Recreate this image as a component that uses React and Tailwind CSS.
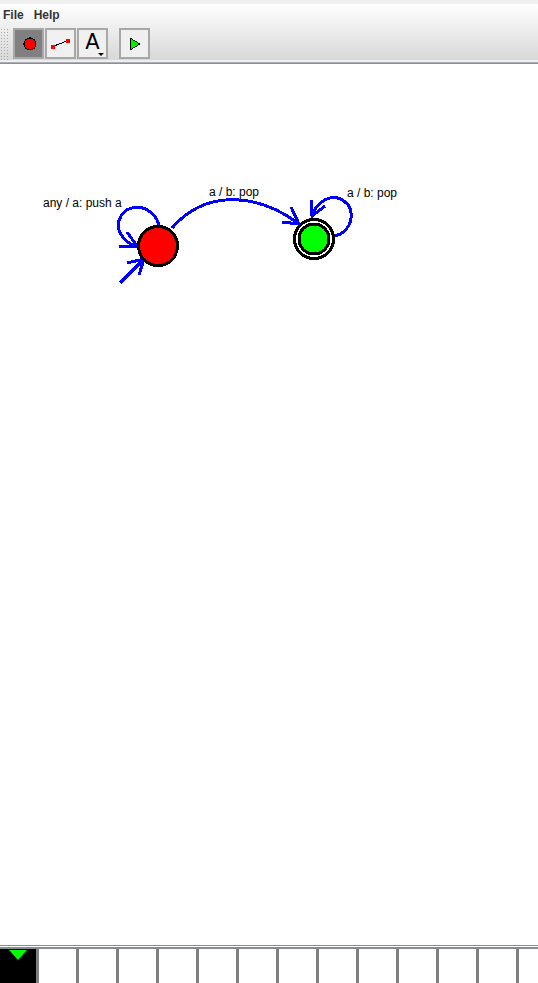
const cells = Array.from({ length: 14 }, (_, i) => i);

function ToolButton({ active, className = "", children }) {
  return (
    <button
      className={`flex h-[31px] w-[31px] shrink-0 items-center justify-center border-2 border-[#a8a8a8] ${
        active ? "bg-[#808080]" : "bg-[#f0f0f0]"
      } ${className}`}
    >
      {children}
    </button>
  );
}

function Grip() {
  return (
    <div className="h-[32px] w-[9px] shrink-0 bg-[radial-gradient(#a8a8a8_1px,transparent_1px)] bg-[length:3px_3px]" />
  );
}

// canvas starts at y=64 in the window, the viewBox keeps window coordinates
function Automaton() {
  const blue = "#0000ff";
  return (
    <svg width="538" height="240" viewBox="0 64 538 240" className="block" fill="none" shapeRendering="crispEdges">
      <g stroke={blue} strokeWidth="3">
        <path d="M159 226 C155 206 130 201 121 216 C113 230 125 243 136 246" />
        <path d="M119 246 L137 246 L127 232" />
        <path d="M120 283 L144 259" />
        <path d="M127 263 L144 259 L139 275" />
        <path d="M172 228 C205 190 255 192 298 223" />
        <path d="M282 222 L299 224 L291 207" />
        <path d="M335 236 C352 232 357 210 344 201 C332 192 316 202 312 216" />
        <path d="M325 206 L312 216 L311 200" />
      </g>
      <circle cx="158" cy="246" r="19.5" fill="#ff0000" stroke="#000" strokeWidth="3" />
      <circle cx="314" cy="239" r="19.5" fill="#fff" stroke="#000" strokeWidth="3" />
      <circle cx="314" cy="239" r="15" fill="#00ff00" stroke="#000" strokeWidth="3" />
    </svg>
  );
}

export default function App() {
  return (
    <div className="flex h-[983px] w-[538px] flex-col overflow-hidden bg-white font-['Liberation_Sans',sans-serif]">
      <div className="flex h-[64px] shrink-0 flex-col bg-[#f0f0f0] pt-[4px]">
        <div className="flex min-h-0 flex-1 flex-col bg-gradient-to-b from-white to-[#d8d8d8]">
          <div className="flex h-[22px] shrink-0 items-start gap-[10px] pl-[3px] pt-[4px] text-[12px] font-bold leading-[14px] text-[#333333]">
            <span>File</span>
            <span>Help</span>
          </div>

          <div className="flex min-h-0 flex-1 items-start pt-[2px]">
            <Grip />
            <div className="ml-[4px] flex gap-px">
              <ToolButton active>
                <svg width="14" height="14" viewBox="0 0 14 14" shapeRendering="crispEdges" className="translate-x-px">
                  <circle cx="7" cy="7" r="6" fill="#ff0000" stroke="#000" strokeWidth="1.2" />
                </svg>
              </ToolButton>
              <ToolButton>
                <svg width="22" height="12" viewBox="0 0 22 12" shapeRendering="crispEdges">
                  <path d="M4 8 L17 3" stroke="#000" strokeWidth="1" />
                  <rect x="1" y="7" width="4" height="4" fill="#ff0000" />
                  <rect x="16" y="1" width="4" height="4" fill="#ff0000" />
                </svg>
              </ToolButton>
              <ToolButton className="relative">
                <span className="mb-[3px] font-['DejaVu_Sans',sans-serif] text-[21px] leading-none text-black">A</span>
                <span className="absolute bottom-[1px] right-[2px] h-0 w-0 border-x-[3px] border-t-[3px] border-x-transparent border-t-black" />
              </ToolButton>
            </div>
            <ToolButton className="ml-[11px]">
              <svg width="12" height="14" viewBox="0 0 12 14" shapeRendering="crispEdges">
                <path d="M1 1 L11 7 L1 13 Z" fill="#00ee00" stroke="#000" strokeWidth="1" />
              </svg>
            </ToolButton>
          </div>
        </div>
        <div className="h-[2px] shrink-0 bg-[#eeeeee]" />
        <div className="h-px shrink-0 bg-[#a9aeb5]" />
        <div className="h-px shrink-0 bg-[#8a8f96]" />
      </div>

      <div className="relative min-h-0 flex-1 text-[12px] leading-[14px] text-black">
        <Automaton />
        <span className="absolute left-[43px] top-[132px]">any / a: push a</span>
        <span className="absolute left-[209px] top-[121px]">a / b: pop</span>
        <span className="absolute left-[347px] top-[122px]">a / b: pop</span>
      </div>

      <div className="flex h-[38px] shrink-0 flex-col">
        <div className="h-px bg-[#868b94]" />
        <div className="h-px bg-white" />
        <div className="h-[2px] bg-[#868b94]" />
        <div className="flex min-h-0 flex-1">
          {cells.map((i) => (
            <div
              key={i}
              className={`flex h-full shrink-0 justify-center border-r-[3px] border-[#808080] ${
                i === 0 ? "w-[39px] bg-black" : "w-[40px] bg-white"
              }`}
            >
              {i === 0 && (
                <svg width="18" height="10" viewBox="0 0 18 10" className="mt-px">
                  <path d="M0 0 H18 L9 10 Z" fill="#00ff00" />
                </svg>
              )}
            </div>
          ))}
        </div>
      </div>
    </div>
  );
}
